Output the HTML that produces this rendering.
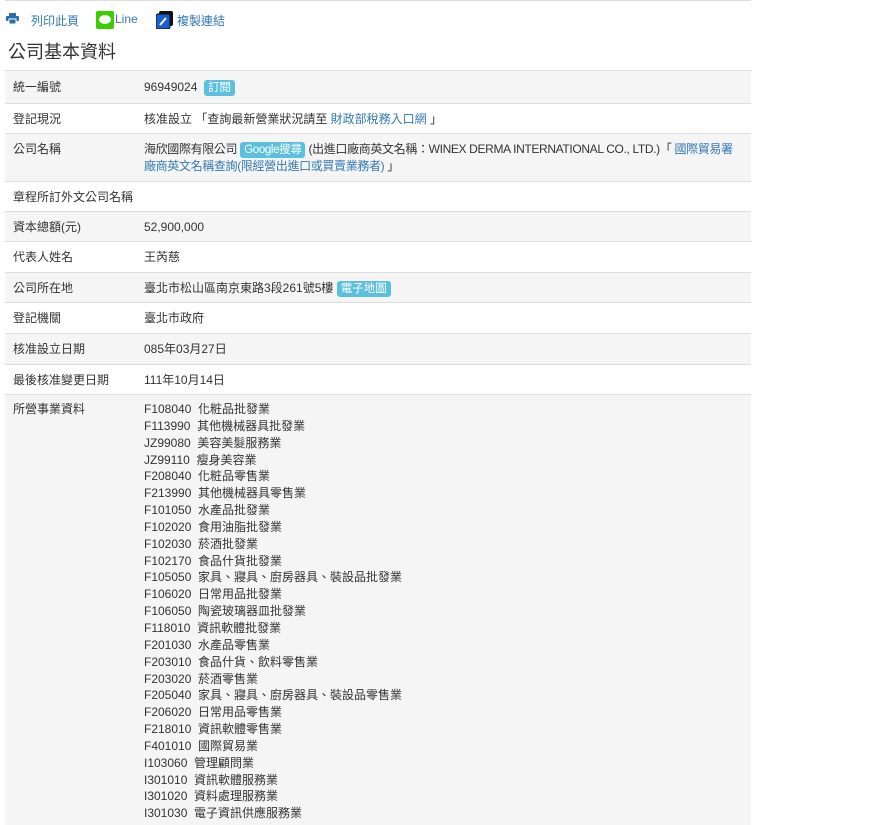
<!DOCTYPE html>
<html><head><meta charset="utf-8"><style>
body{margin:0;background:#fff;font-family:"Liberation Sans","Noto Sans CJK TC",sans-serif;font-size:12px;color:#333;}
.wrap{position:absolute;left:5px;top:0;width:746px;}
.top{border-top:1px solid #ddd;height:1px;}
.tools{position:absolute;top:12px;left:0;height:18px;font-size:12px;color:#337ab7;white-space:nowrap}
.tools span{position:absolute;top:0;}
h3{position:absolute;top:38px;left:3px;margin:0;font-size:18px;font-weight:normal;color:#333}
table{position:absolute;top:70px;left:0;width:746px;border-collapse:collapse}
td{border-top:1px solid #ddd;vertical-align:top;padding:0;line-height:17px}
td.l{width:131px;padding-left:8px}
tr.s td{background:#f5f5f5}
a{color:#337ab7;text-decoration:none}
.b{display:inline-block;background:#5bc0de;color:#fff;border-radius:3px;padding:0 4px;line-height:16px;font-size:11.5px}
.list div{height:16.85px;line-height:16.85px}
.nw{white-space:nowrap;letter-spacing:-0.35px}
</style></head><body>
<div class="wrap">
<div class="top"></div>
<div class="tools">
<span style="left:1px;top:1px"><svg width="13" height="11"><rect x="3" y="0" width="7" height="3" fill="#2a6fa8"/><rect x="0" y="3" width="13" height="5" rx="1" fill="#2a6fa8"/><rect x="3" y="6" width="7" height="5" fill="#2a6fa8" stroke="#fff" stroke-width="1"/></svg></span>
<span style="left:26px;top:0">列印此頁</span>
<span style="left:91px;top:-1px"><svg width="18" height="18"><rect width="18" height="18" rx="2" fill="#3ace01"/><ellipse cx="9" cy="8.5" rx="6" ry="4.5" fill="#fff"/></svg></span>
<span style="left:110px;top:0">Line</span>
<span style="left:151px;top:-1px"><svg width="17" height="18"><rect x="3" y="0" width="14" height="15" rx="2" fill="#111"/><rect x="0" y="3" width="14" height="15" rx="2" fill="#1a5fd0" stroke="#111"/><path d="M4 14 L10 7" stroke="#fff" stroke-width="2"/></svg></span>
<span style="left:172px;top:0">複製連結</span>
</div>
<h3>公司基本資料</h3>
<table>
<tr class="s" style="height:33px"><td class="l" style="padding-top:8px">統一編號</td><td style="padding-top:8px">96949024 &nbsp;<span class="b">訂閱</span></td></tr>
<tr style="height:30px"><td class="l" style="padding-top:7px">登記現況</td><td style="padding-top:7px">核准設立 「查詢最新營業狀況請至 <a>財政部稅務入口網</a> 」</td></tr>
<tr class="s" style="height:48px"><td class="l" style="padding-top:7px">公司名稱</td><td style="padding-top:7px"><div class="nw">海欣國際有限公司 <span class="b">Google搜尋</span> (出進口廠商英文名稱：WINEX DERMA INTERNATIONAL CO., LTD.)「 <a>國際貿易署</a></div><div class="nw"><a>廠商英文名稱查詢(限經營出進口或買賣業務者)</a> 」</div></td></tr>
<tr style="height:30px"><td class="l" style="padding-top:7px">章程所訂外文公司名稱</td><td></td></tr>
<tr class="s" style="height:30px"><td class="l" style="padding-top:7px">資本總額(元)</td><td style="padding-top:7px">52,900,000</td></tr>
<tr style="height:31px"><td class="l" style="padding-top:7px">代表人姓名</td><td style="padding-top:7px">王芮慈</td></tr>
<tr class="s" style="height:30px"><td class="l" style="padding-top:7px">公司所在地</td><td style="padding-top:7px">臺北市松山區南京東路3段261號5樓 <span class="b">電子地圖</span></td></tr>
<tr style="height:31px"><td class="l" style="padding-top:7px">登記機關</td><td style="padding-top:7px">臺北市政府</td></tr>
<tr class="s" style="height:31px"><td class="l" style="padding-top:7px">核准設立日期</td><td style="padding-top:7px">085年03月27日</td></tr>
<tr style="height:30px"><td class="l" style="padding-top:7px">最後核准變更日期</td><td style="padding-top:7px">111年10月14日</td></tr>
<tr class="s" style="height:430px"><td class="l" style="padding-top:6px">所營事業資料</td><td style="padding-top:6px" class="list">
<div>F108040&nbsp; 化粧品批發業</div><div>F113990&nbsp; 其他機械器具批發業</div><div>JZ99080&nbsp; 美容美髮服務業</div><div>JZ99110&nbsp; 瘦身美容業</div><div>F208040&nbsp; 化粧品零售業</div><div>F213990&nbsp; 其他機械器具零售業</div><div>F101050&nbsp; 水產品批發業</div><div>F102020&nbsp; 食用油脂批發業</div><div>F102030&nbsp; 菸酒批發業</div><div>F102170&nbsp; 食品什貨批發業</div><div>F105050&nbsp; 家具、寢具、廚房器具、裝設品批發業</div><div>F106020&nbsp; 日常用品批發業</div><div>F106050&nbsp; 陶瓷玻璃器皿批發業</div><div>F118010&nbsp; 資訊軟體批發業</div><div>F201030&nbsp; 水產品零售業</div><div>F203010&nbsp; 食品什貨、飲料零售業</div><div>F203020&nbsp; 菸酒零售業</div><div>F205040&nbsp; 家具、寢具、廚房器具、裝設品零售業</div><div>F206020&nbsp; 日常用品零售業</div><div>F218010&nbsp; 資訊軟體零售業</div><div>F401010&nbsp; 國際貿易業</div><div>I103060&nbsp; 管理顧問業</div><div>I301010&nbsp; 資訊軟體服務業</div><div>I301020&nbsp; 資料處理服務業</div><div>I301030&nbsp; 電子資訊供應服務業</div>
</td></tr>
</table>
</div>
</body></html>
